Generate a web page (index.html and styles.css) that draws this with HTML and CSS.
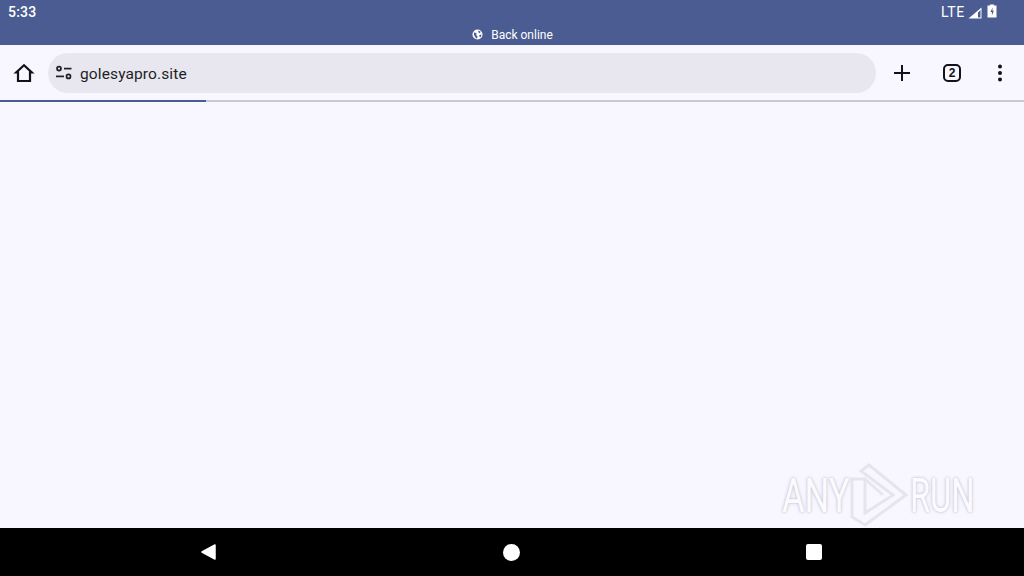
FILE: index.html
```html
<!DOCTYPE html>
<html lang="en">
<head>
    <meta charset="UTF-8">
    <title>golesyapro.site</title>
    <link rel="stylesheet" href="styles.css">
</head>
<body>
    <!-- Android status bar -->
    <header class="status-bar">
        <div class="status-row">
            <span class="clock">5:33</span>
            <div class="status-icons">
                <span class="lte">LTE</span>
                <svg class="signal" width="14" height="12" viewBox="0 0 14 12">
                    <path d="M13.5 0.5V11.5H0.5Z M12.5 3L10 5.4V10.5H12.5Z" fill="#fff" fill-rule="evenodd"/>
                </svg>
                <svg class="battery" width="10" height="14" viewBox="0 0 10 14">
                    <path d="M3 1.5V0.5H7V1.5H9.5V13.5H0.5V1.5Z" fill="#fff"/>
                    <path d="M5.6 3.5L3.4 8H4.9V11.5L6.9 6.8H5.4Z" fill="#4a5c91"/>
                </svg>
            </div>
        </div>
        <div class="online-row">
            <svg width="11" height="11" viewBox="0 0 12 12">
                <circle cx="6" cy="6" r="5.5" fill="#fff"/>
                <path d="M2.5 3.5L5 4.5L4.5 6.5L6 8L5.5 10.5L3.5 9L2 6Z M7 1.5L9.5 3L8.5 4.5L6.8 3.5Z M8 6.5L10.5 6L9.5 9L8 8.5Z" fill="#4a5c91"/>
            </svg>
            <span>Back online</span>
        </div>
    </header>

    <!-- Browser toolbar -->
    <div class="toolbar">
        <button class="tool-btn">
            <svg width="24" height="24" viewBox="0 0 24 24" fill="none" stroke="#111318" stroke-width="2.2" stroke-linejoin="miter">
                <path d="M12 4.3L4.2 11.5H6V20H18V11.5H19.8Z"/>
            </svg>
        </button>
        <div class="url-bar">
            <svg class="tune" width="18" height="18" viewBox="0 0 18 18" fill="none" stroke="#1d1f26" stroke-width="1.7">
                <circle cx="4" cy="4.6" r="2"/>
                <path d="M9 4.6H16.5"/>
                <path d="M1 12.4H9"/>
                <circle cx="13.5" cy="12.4" r="2"/>
            </svg>
            <span class="url">golesyapro.site</span>
        </div>
        <div class="toolbar-right">
            <button class="tool-btn plus-btn">
                <svg width="24" height="24" viewBox="0 0 24 24" fill="none" stroke="#111318" stroke-width="2">
                    <path d="M12 4V20M4 12H20"/>
                </svg>
            </button>
            <button class="tool-btn tabs-btn">
                <span class="tab-count">2</span>
            </button>
            <button class="tool-btn menu-btn">
                <svg width="24" height="24" viewBox="0 0 24 24" fill="#111318">
                    <circle cx="12" cy="5.5" r="2"/>
                    <circle cx="12" cy="12" r="2"/>
                    <circle cx="12" cy="18.5" r="2"/>
                </svg>
            </button>
        </div>
    </div>

    <!-- Page load progress -->
    <div class="progress"><div class="progress-fill"></div></div>

    <main class="page">
        <div class="watermark">
            <span class="mark-text">ANY</span>
            <svg width="60" height="64" viewBox="0 0 60 64" fill="none" stroke="#e6e4ee" stroke-width="3">
                <path d="M3 16V54L16 62L57 32L20 2L12 8L44 32L16 50V16Z"/>
                <path d="M16 16L34 32"/>
            </svg>
            <span class="mark-text run-text">RUN</span>
        </div>
    </main>

    <!-- Android nav bar -->
    <footer class="nav-bar">
        <svg class="back-icon" width="16" height="18" viewBox="0 0 16 18">
            <path d="M15 2V16L2 9Z" fill="#fff" stroke="#fff" stroke-width="1.5" stroke-linejoin="round"/>
        </svg>
        <div class="home-icon"></div>
        <div class="recents-icon"></div>
    </footer>
</body>
</html>
```

FILE: styles.css
```css
html, body {
    margin: 0;
    padding: 0;
    height: 100%;
    overflow: hidden;
}

body {
    display: flex;
    flex-direction: column;
    background-color: #f8f7ff;
    font-family: 'Roboto', sans-serif;
    color: #1d1f26;
}

/* Status bar */
.status-bar {
    height: 45px;
    background-color: #4a5c91;
    color: white;
    flex-shrink: 0;
}

.status-row {
    height: 24px;
    display: flex;
    align-items: center;
    justify-content: space-between;
    padding: 0 27px 0 8px;
}

.clock {
    font-size: 14px;
    font-weight: 500;
    letter-spacing: 0.2px;
}

.status-icons {
    display: flex;
    align-items: center;
    gap: 3px;
}

.lte {
    font-size: 14px;
    letter-spacing: 0.7px;
}

.signal {
    margin-top: 2px;
}

.battery {
    margin-left: 2px;
    margin-top: -2px;
}

.online-row {
    height: 21px;
    display: flex;
    align-items: center;
    justify-content: center;
    gap: 8px;
    font-size: 12px;
    padding-left: 1px;
}

/* Toolbar */
.toolbar {
    height: 55px;
    display: flex;
    align-items: center;
    background-color: #f8f7ff;
    flex-shrink: 0;
}

.tool-btn {
    width: 48px;
    height: 48px;
    padding: 0;
    border: none;
    background: none;
    display: flex;
    align-items: center;
    justify-content: center;
}

.url-bar {
    flex: 1;
    height: 40px;
    margin-top: 1px;
    display: flex;
    align-items: center;
    gap: 7px;
    padding-left: 7px;
    border-radius: 20px;
    background-color: #e8e7ef;
}

.url {
    font-size: 15.5px;
    letter-spacing: 0.12px;
    padding-top: 1px;
}

.toolbar-right {
    display: flex;
}

.plus-btn, .tabs-btn {
    margin-left: 2px;
}

.tab-count {
    width: 14px;
    height: 14px;
    border: 2px solid #111318;
    border-radius: 5px;
    display: flex;
    align-items: center;
    justify-content: center;
    font-size: 12px;
    font-weight: 700;
    color: #111318;
}

/* Progress line */
.progress {
    height: 2px;
    background-color: #c9c8d0;
    flex-shrink: 0;
}

.progress-fill {
    width: 206px;
    height: 100%;
    background-color: #4a5c91;
}

/* Page area */
.page {
    flex: 1;
    position: relative;
}

.watermark {
    position: absolute;
    left: 782px;
    bottom: 0;
    width: 194px;
    display: flex;
    align-items: center;
    justify-content: space-between;
    font-size: 48px;
    color: #fbfaff;
    text-shadow: 0 0 4px #c4c2ce, 0 0 2px #d4d2dc;
}

.mark-text {
    display: block;
    width: 66px;
    white-space: nowrap;
    transform: scaleX(0.72);
    transform-origin: left center;
}

.run-text {
    transform: scaleX(0.68);
}

.watermark svg {
    margin-bottom: 1px;
    flex-shrink: 0;
}

/* Navigation bar */
.nav-bar {
    height: 48px;
    background-color: black;
    flex-shrink: 0;
    display: flex;
    align-items: center;
    padding-left: 200px;
}

.back-icon {
    flex-shrink: 0;
}

.home-icon {
    width: 17px;
    height: 17px;
    margin-left: 287px;
    border-radius: 50%;
    background-color: white;
}

.recents-icon {
    width: 16px;
    height: 16px;
    margin-left: 286px;
    border-radius: 2px;
    background-color: white;
}
```
